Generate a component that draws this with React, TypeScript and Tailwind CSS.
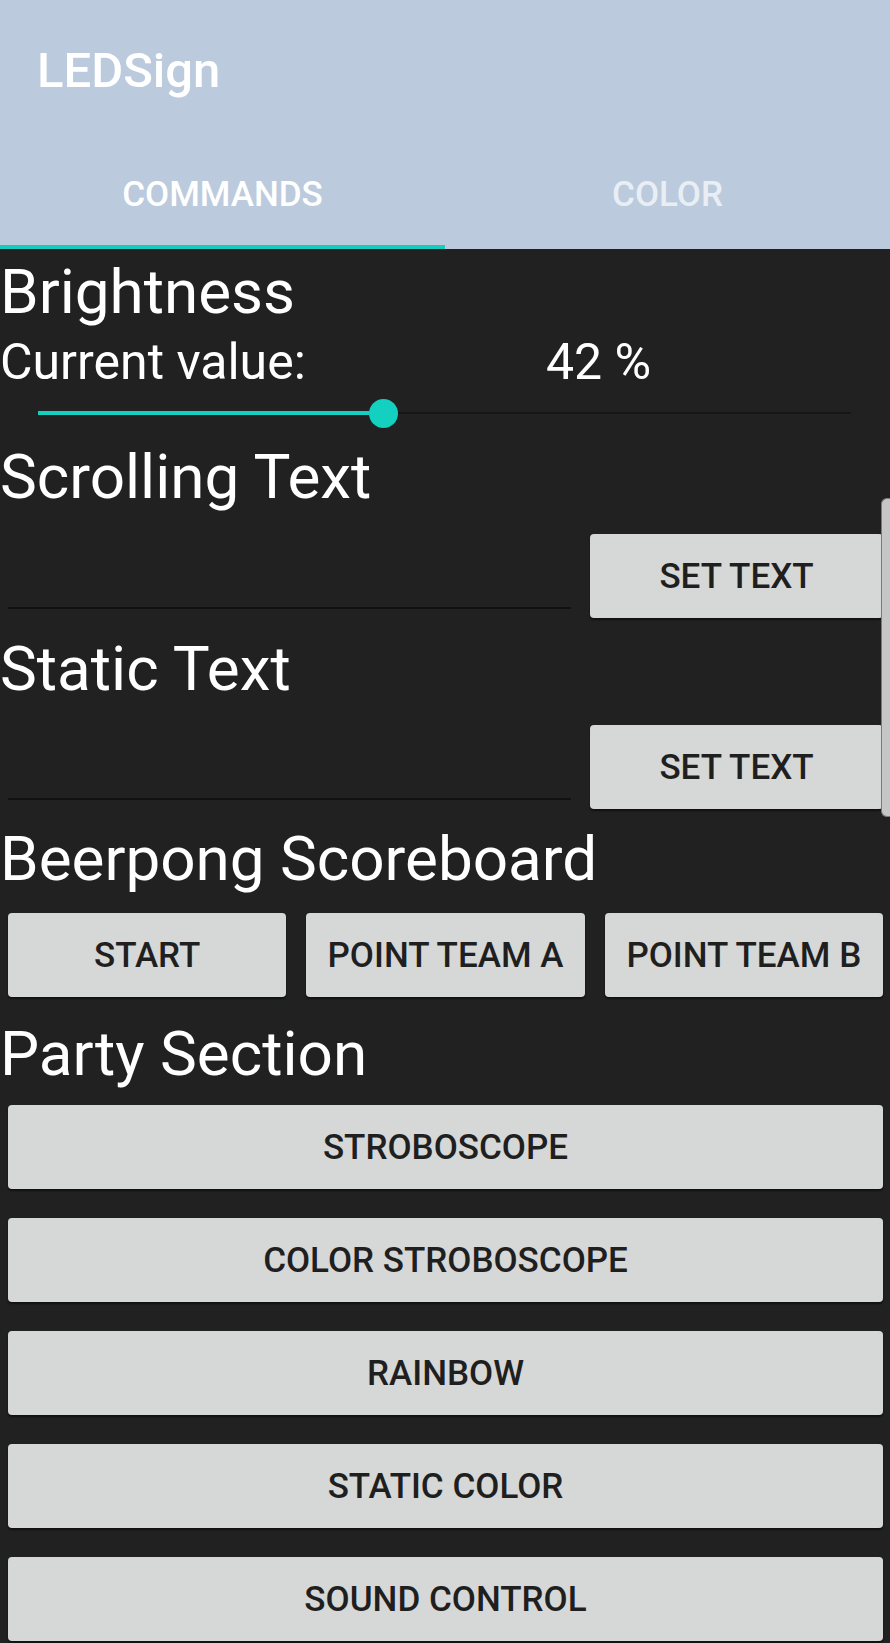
import React from 'react';

const btn =
  'h-[84px] rounded-[4px] bg-[#d6d7d7] text-[#1f1f1f] text-[35px] leading-none font-medium flex items-center justify-center shadow-[0_2px_2px_rgba(0,0,0,0.5)]';

const Heading = ({ children, className }: { children: React.ReactNode; className: string }) => (
  <h2 className={`text-[62px] leading-none font-normal text-white ${className}`}>{children}</h2>
);

const TextRow = ({ className }: { className: string }) => (
  <div className={`flex items-end pl-[8px] pr-[7px] ${className}`}>
    {/* edit text */}
    <div className="w-[563px] mb-[9px] border-b-2 border-[#111111]" />
    <button className={`${btn} ml-auto w-[293px]`}>SET TEXT</button>
  </div>
);

const App = () => {
  return (
    <div className="relative w-full h-[1643px] overflow-hidden bg-[#212121] font-['Roboto',sans-serif]">
      {/* App bar + tabs */}
      <div className="bg-[#bbcbdd]">
        <div className="h-[149px] pt-[46px] pl-[37px]">
          <h1 className="text-[49px] leading-none font-medium text-white">LEDSign</h1>
        </div>
        <div className="flex h-[96px] pb-[5px]">
          <div className="flex-1 flex items-center justify-center text-[35px] leading-none font-medium text-white">
            COMMANDS
          </div>
          <div className="flex-1 flex items-center justify-center text-[35px] leading-none font-medium text-white/70">
            COLOR
          </div>
        </div>
        <div className="flex h-[4px]">
          <div className="w-1/2 bg-[#17cbbd]" />
        </div>
      </div>

      {/* Brightness */}
      <Heading className="mt-[12px]">Brightness</Heading>
      <div className="mt-[14px] flex text-[50px] leading-none text-white">
        <span className="w-[546px]">Current value:</span>
        <span>42 %</span>
      </div>
      <div className="mt-[12px] h-[28px] ml-[38px] w-[813px] flex items-center">
        <div className="w-[331px] h-[4px] bg-[#14d0c0]" />
        <div className="w-[29px] h-[29px] shrink-0 rounded-full bg-[#14d0c0]" />
        <div className="flex-1 h-[2px] bg-[#161616]" />
      </div>

      {/* Scrolling text */}
      <Heading className="mt-[19px]">Scrolling Text</Heading>
      <TextRow className="mt-[26px]" />

      {/* Static text */}
      <Heading className="mt-[20px]">Static Text</Heading>
      <TextRow className="mt-[25px]" />

      {/* Beerpong */}
      <Heading className="mt-[19px]">Beerpong Scoreboard</Heading>
      <div className="mt-[23px] flex gap-[20px] pl-[8px] pr-[7px]">
        <button className={`${btn} flex-1`}>START</button>
        <button className={`${btn} flex-1`}>POINT TEAM A</button>
        <button className={`${btn} flex-1`}>POINT TEAM B</button>
      </div>

      {/* Party */}
      <Heading className="mt-[26px]">Party Section</Heading>
      <div className="mt-[20px] flex flex-col gap-[29px] pl-[8px] pr-[7px]">
        <button className={btn}>STROBOSCOPE</button>
        <button className={btn}>COLOR STROBOSCOPE</button>
        <button className={btn}>RAINBOW</button>
        <button className={btn}>STATIC COLOR</button>
        <button className={btn}>SOUND CONTROL</button>
      </div>

      {/* scroll handle */}
      <div className="absolute right-0 top-[498px] w-[9px] h-[319px] rounded-l-[6px] bg-[#c6c6c6] border border-r-0 border-[#7a7a7a]" />
    </div>
  );
};

export default App;
